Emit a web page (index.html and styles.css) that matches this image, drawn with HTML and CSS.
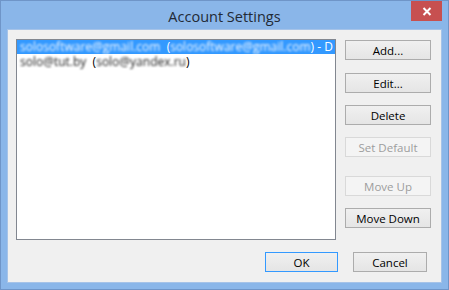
FILE: index.html
```html
<!DOCTYPE html>
<html>
<head>
<meta charset="utf-8">
<link rel="stylesheet" href="styles.css">
</head>
<body>
<div class="window">
  <div class="titlebar">
    <span class="title">Account Settings</span>
    <div class="close">
      <svg width="10" height="9" viewBox="0 0 10 9"><path d="M1.5 1 L8.5 8 M8.5 1 L1.5 8" stroke="#fff" stroke-width="2"/></svg>
    </div>
  </div>
  <div class="client">
    <div class="main">
      <div class="list">
        <div class="row selected"><span class="blur">solosoftware@gmail.com</span>&nbsp; (<span class="blur">solosoftware@gmail.com</span>) - D</div>
        <div class="row"><span class="blur dark">solo@tut.by</span>&nbsp; (<span class="blur dark">solo@yandex.ru</span>)</div>
      </div>
      <div class="buttons">
        <button class="btn add">Add...</button>
        <button class="btn edit">Edit...</button>
        <button class="btn del">Delete</button>
        <button class="btn setdef" disabled>Set Default</button>
        <button class="btn up" disabled>Move Up</button>
        <button class="btn down">Move Down</button>
      </div>
    </div>
    <div class="footer">
      <button class="btn ok">OK</button>
      <button class="btn cancel">Cancel</button>
    </div>
  </div>
</div>
</body>
</html>
```

FILE: styles.css
```css
html, body {
  margin: 0;
  padding: 0;
}
body {
  width: 449px;
  height: 290px;
  overflow: hidden;
}
.window {
  box-sizing: border-box;
  width: 449px;
  height: 290px;
  background: #8ab6e9;
  border: 1px solid #6f95c8;
  padding: 0 6px 6px 6px;
  display: flex;
  flex-direction: column;
}
.titlebar {
  position: relative;
  height: 28px;
  display: flex;
  align-items: center;
  justify-content: center;
}
.title {
  font-family: "Open Sans", "Noto Sans", sans-serif;
  font-size: 14.5px;
  color: #222a35;
  margin-top: 2px;
}
.close {
  position: absolute;
  top: 0;
  right: 0;
  width: 31px;
  height: 20px;
  background: #c75050;
  display: flex;
  align-items: center;
  justify-content: center;
}
.close svg { display: block; }
.client {
  box-sizing: border-box;
  width: 435px;
  height: 254px;
  background: #f0f0f0;
  border: 1px solid #a6c3e8;
  padding: 9px 0 0 8px;
  display: flex;
  flex-direction: column;
}
.main {
  display: flex;
}
.list {
  box-sizing: border-box;
  width: 320px;
  height: 201px;
  background: #fff;
  border: 1px solid #828790;
  overflow: hidden;
  font-family: "Open Sans", "Noto Sans", sans-serif;
  font-size: 12px;
  color: #000;
}
.row {
  height: 14px;
  line-height: 14px;
  padding-left: 3px;
  white-space: nowrap;
}
.row.selected {
  background: #3399ff;
  color: #fff;
}
.blur {
  filter: blur(0.8px);
  color: #f4f8ff;
}
.blur.dark {
  color: #222;
}
.row + .row {
  margin-top: 1px;
}
.buttons {
  display: flex;
  flex-direction: column;
  margin-left: 9px;
  width: 86px;
}
.btn {
  box-sizing: border-box;
  height: 20px;
  padding: 0;
  margin: 0;
  font-family: "Open Sans", "Noto Sans", sans-serif;
  font-size: 11.5px;
  color: #000;
  border: 1px solid #acacac;
  background: linear-gradient(#f0f0f0, #e5e5e5);
  border-radius: 0;
  line-height: 17px;
}
.btn:disabled {
  color: #9d9d9d;
  border-color: #d9d9d9;
  background: #f4f4f4;
}
.buttons .btn { width: 86px; }
.add { margin-top: 1px; }
.edit { margin-top: 13px; }
.del { margin-top: 12px; }
.setdef { margin-top: 12px; }
.up { margin-top: 19px; }
.down { margin-top: 12px; }
.footer {
  display: flex;
  margin-top: 12px;
  padding-left: 249px;
}
.ok {
  width: 73px;
  border-color: #3399ff;
}
.cancel {
  width: 74px;
  margin-left: 15px;
}
```
